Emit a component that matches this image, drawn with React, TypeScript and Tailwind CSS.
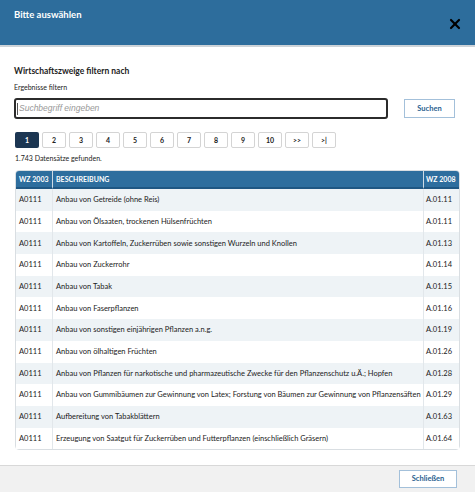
import { X } from "lucide-react";

const rows = [
  ["A0111", "Anbau von Getreide (ohne Reis)", "A.01.11"],
  ["A0111", "Anbau von Ölsaaten, trockenen Hülsenfrüchten", "A.01.11"],
  ["A0111", "Anbau von Kartoffeln, Zuckerrüben  sowie sonstigen Wurzeln und Knollen", "A.01.13"],
  ["A0111", "Anbau von Zuckerrohr", "A.01.14"],
  ["A0111", "Anbau von Tabak", "A.01.15"],
  ["A0111", "Anbau von Faserpflanzen", "A.01.16"],
  ["A0111", "Anbau von sonstigen einjährigen Pflanzen a.n.g.", "A.01.19"],
  ["A0111", "Anbau von ölhaltigen Früchten", "A.01.26"],
  ["A0111", "Anbau von Pflanzen für narkotische und pharmazeutische Zwecke für den Pflanzenschutz u.Ä.; Hopfen", "A.01.28"],
  ["A0111", "Anbau von Gummibäumen zur Gewinnung von Latex; Forstung von Bäumen zur Gewinnung von Pflanzensäften", "A.01.29"],
  ["A0111", "Aufbereitung von Tabakblättern", "A.01.63"],
  ["A0111", "Erzeugung von Saatgut für Zuckerrüben und Futterpflanzen (einschließlich Gräsern)", "A.01.64"],
];

const pages = ["1", "2", "3", "4", "5", "6", "7", "8", "9", "10", ">>", ">|"];

const App = () => {
  return (
    <div className="w-[475px] h-[492px] bg-white flex flex-col font-['Lato',sans-serif] text-[#222] overflow-hidden">
      <div className="h-[47px] bg-[#2d6d9c] border-b-2 border-[#cdd3d8] flex justify-between px-[14px] shrink-0">
        <h1 className="text-white font-bold text-[9.5px] pt-[8px]">Bitte auswählen</h1>
        <X className="text-black mt-[16px] -mr-[2px]" size={16} strokeWidth={3.2} />
      </div>

      <div className="px-[14px] pt-[19px] flex flex-col flex-1">
        <h2 className="font-bold text-[8.5px] leading-[11px]">Wirtschaftszweige filtern nach</h2>
        <p className="text-[7px] mt-[6px] leading-[9px]">Ergebnisse filtern</p>

        <div className="flex items-center mt-[6px]">
          <div className="w-[374px] h-[21px] border-2 border-[#2b2b2b] rounded-[3px] flex items-center pl-[1px]">
            <span className="w-px h-[12px] bg-[#555]" />
            <input
              className="flex-1 bg-transparent outline-none px-[1px] text-[8.5px] italic font-['Liberation_Sans',sans-serif] placeholder:text-[#999]"
              placeholder="Suchbegriff eingeben"
            />
          </div>
          <button className="ml-[16px] w-[51px] h-[19px] border border-[#a3c0da] bg-white text-[#2a5f8f] font-bold text-[7.5px]">
            Suchen
          </button>
        </div>

        <div className="flex gap-[3px] mt-[13px] ml-px">
          {pages.map((p, i) => (
            <button
              key={p}
              className={
                i === 0
                  ? "w-[24px] h-[16px] rounded-[2px] bg-[#1c3652] text-white font-bold text-[7px]"
                  : "w-[24px] h-[16px] rounded-[2px] border border-[#d4d4d4] bg-white text-[#222] font-bold text-[7px]"
              }
            >
              {p}
            </button>
          ))}
        </div>

        <p className="text-[7px] mt-[5px] ml-px leading-[10px]">1.743 Datensätze gefunden.</p>

        <table className="mt-[7px] ml-px w-[445px] table-fixed border-separate border-spacing-0 border border-[#d9dee2] rounded-[4px] text-[7.5px]">
          <colgroup>
            <col className="w-[36px]" />
            <col />
            <col className="w-[36px]" />
          </colgroup>
          <thead>
            <tr className="h-[18px] bg-[#2e6e9e] text-white font-bold text-left text-[7px]">
              <th className="pl-[3px] border-b-2 border-[#1f5783] rounded-tl-[3px] whitespace-nowrap">WZ 2003</th>
              <th className="pl-[3px] border-b-2 border-l border-l-[#cfdbe5] border-[#1f5783]">BESCHREIBUNG</th>
              <th className="pl-[2px] border-b-2 border-l border-l-[#cfdbe5] border-[#1f5783] rounded-tr-[3px] whitespace-nowrap">
                WZ 2008
              </th>
            </tr>
          </thead>
          <tbody>
            {rows.map((r, i) => (
              <tr key={i} className={i % 2 === 0 ? "h-[21.7px] bg-[#eef3f6]" : "h-[21.7px] bg-white"}>
                <td className="pl-[3px]">{r[0]}</td>
                <td className="pl-[3px] border-l border-[#e2e7eb] whitespace-nowrap overflow-hidden">{r[1]}</td>
                <td className="pl-[2px] border-l border-[#e2e7eb]">{r[2]}</td>
              </tr>
            ))}
          </tbody>
        </table>
      </div>

      <div className="h-[27px] bg-[#f1f1f1] border-t border-[#d8d8d8] flex items-center justify-end pr-[18px] shrink-0">
        <button className="w-[58px] h-[18px] border border-[#a3c0da] bg-white text-[#2a5f8f] font-bold text-[7.5px]">
          Schließen
        </button>
      </div>
    </div>
  );
};

export default App;
